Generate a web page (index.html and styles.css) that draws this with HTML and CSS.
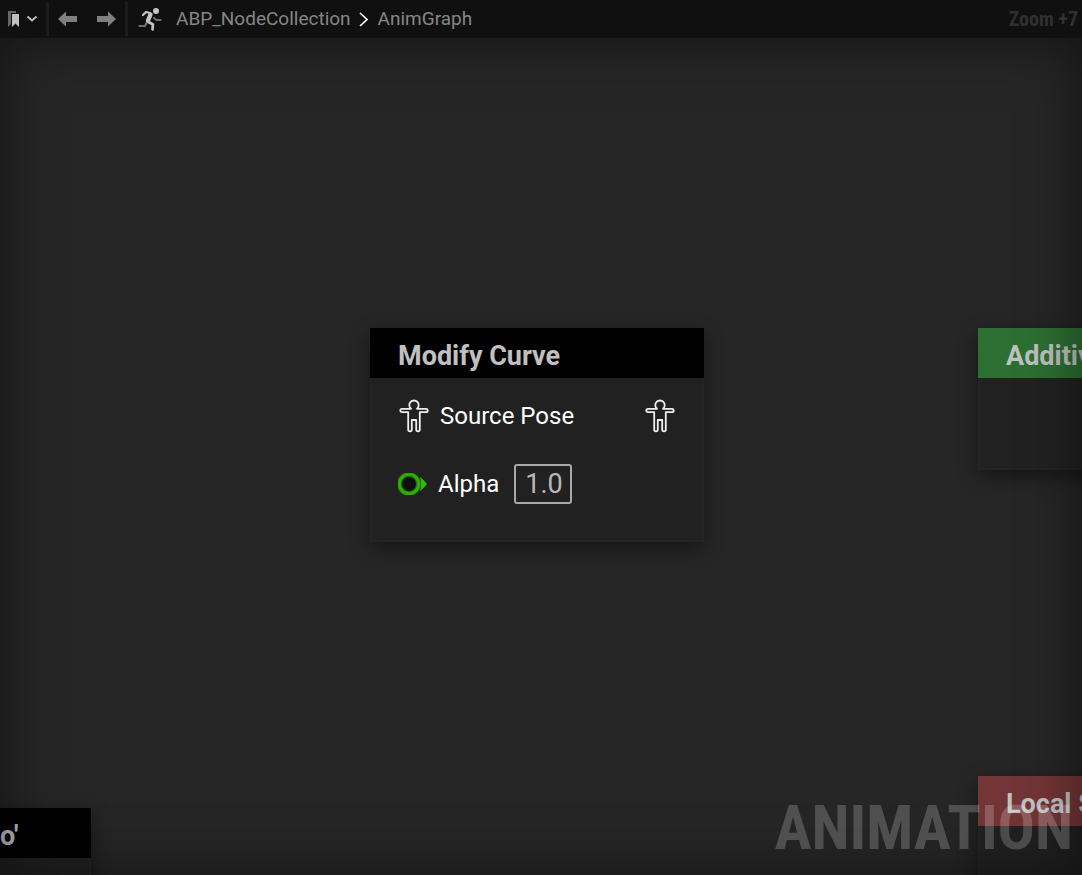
FILE: index.html
```html
<!DOCTYPE html>
<html lang="en">
<head>
<meta charset="utf-8">
<title>ABP_NodeCollection - AnimGraph</title>
<link rel="stylesheet" href="styles.css">
</head>
<body>
<svg class="defs" aria-hidden="true">
  <symbol id="pose" viewBox="0 0 30 34">
    <path d="M12 9.800 A4.700 4.700 0 1 1 18 9.800 H27 A1.600 1.600 0 0 1 27 13.200 H20.800 V30.500 A1.800 1.800 0 0 1 17.200 30.500 V21 H12.800 V30.500 A1.800 1.800 0 0 1 9.200 30.500 V13.200 H3 A1.600 1.600 0 0 1 3 9.800 Z" fill="none" stroke="#eee" stroke-width="1.800" stroke-linejoin="round"/>
  </symbol>
</svg>
<div class="editor">
  <header class="toolbar">
    <button class="tool bookmarks" aria-label="Bookmarks">
      <svg width="32" height="20" viewBox="0 0 32 20"><path d="M1 2H9V4H4V15L1 18Z" fill="#666"/><path d="M5 5H12V18L8.500 14.500 5 18Z" fill="#c0c0c0"/><path d="M20.500 7.500L25 11.500 29.500 7.500" fill="none" stroke="#c0c0c0" stroke-width="1.800"/></svg>
    </button>
    <button class="tool" aria-label="Back">
      <svg width="20" height="16" viewBox="0 0 20 16"><path d="M0 8L8 .5V5H19V11H8V15.500Z" fill="#808080"/></svg>
    </button>
    <button class="tool" aria-label="Forward">
      <svg width="20" height="16" viewBox="0 0 20 16"><path d="M20 8L12 .5V5H1V11H12V15.500Z" fill="#808080"/></svg>
    </button>
    <nav class="crumbs" aria-label="Breadcrumb">
      <svg width="24" height="24" viewBox="0 0 24 24"><g fill="none" stroke-linecap="round" stroke-linejoin="round"><path d="M16 11L18.500 13H22.500M9 15L7 19H1.500" stroke="#707070" stroke-width="2.200"/><path d="M5 8L8 5 12 6" stroke="#c4c4c4" stroke-width="2.200"/><path d="M12.500 7.500L10 13.500" stroke="#c4c4c4" stroke-width="4.400"/><path d="M10.500 15L15 17.500 14.500 22.500" stroke="#c4c4c4" stroke-width="2.600"/></g><circle cx="18" cy="4" r="3" fill="#c4c4c4"/></svg>
      <a class="crumb" href="#asset">ABP_NodeCollection</a>
      <svg class="chevron" width="10" height="16" viewBox="0 0 10 16"><path d="M1 2L8 8.500 1 15" fill="none" stroke="#fff" stroke-width="1.700"/></svg>
      <a class="crumb current" href="#graph">AnimGraph</a>
    </nav>
    <span class="zoom">Zoom +7</span>
  </header>
  <main class="canvas">
    <section class="node modify">
      <h2 class="title">Modify Curve</h2>
      <div class="body">
        <div class="row"><svg class="pose"><use href="#pose"/></svg><span class="pin">Source Pose</span><svg class="pose out"><use href="#pose"/></svg></div>
        <div class="row alpha">
          <svg class="port" width="29" height="22" viewBox="0 0 29 22"><circle cx="11" cy="11" r="9.500" fill="#101010" stroke="#1d6a04" stroke-width="5"/><circle cx="11" cy="11" r="9.700" fill="none" stroke="#32ac04" stroke-width="3"/><path d="M22 4Q26 7 29 11 26 15 22 18Q24 11 22 4Z" fill="#32bc02"/></svg>
          <label class="pin" for="alpha">Alpha</label>
          <input class="value" id="alpha" type="text" value="1.0">
        </div>
      </div>
    </section>
    <section class="node additive"><h2 class="title">Additive</h2><div class="body"></div></section>
    <section class="node local"><h2 class="title">Local Space</h2><div class="body"></div></section>
    <section class="node partial"><h2 class="title">o'</h2><div class="body"></div></section>
    <div class="vignette"></div>
    <div class="watermark">ANIMATION</div>
  </main>
</div>
</body>
</html>
```
FILE: styles.css
```css
* { box-sizing: border-box; }
body {
  margin: 0;
  background: #262626;
  color: #fff;
  font-family: Roboto, "Liberation Sans", sans-serif;
}
.defs { position: absolute; width: 0; height: 0; }
.editor { display: flex; flex-direction: column; height: 100vh; overflow: hidden; }
.toolbar {
  display: flex;
  align-items: center;
  flex: none;
  height: 38px;
  padding-right: 4px;
  background: #101010;
}
.tool {
  display: flex;
  align-items: center;
  justify-content: center;
  width: 38px;
  height: 34px;
  padding: 0;
  border: 0;
  background: none;
}
.bookmarks { width: 49px; border-right: 3px solid #1c1c1c; }
.crumbs {
  display: flex;
  align-items: center;
  height: 34px;
  padding-left: 10px;
  border-left: 3px solid #1c1c1c;
}
.crumb { margin-left: 14px; color: #868686; font-size: 19px; line-height: 24px; text-decoration: none; }
.chevron { margin-left: 8px; }
.crumb.current { margin-left: 9px; }
.zoom {
  margin-left: auto;
  color: #303030;
  font-family: "Roboto Condensed", Roboto, sans-serif;
  font-size: 20px;
  font-weight: 700;
}
.canvas { position: relative; flex: 1; overflow: hidden; }
.node {
  position: absolute;
  display: flex;
  flex-direction: column;
  width: 334px;
  box-shadow: 0 6px 18px rgba(0, 0, 0, .45);
}
.title {
  margin: 0;
  padding: 3px 28px 0;
  height: 50px;
  overflow: hidden;
  background: #000;
  color: #c0c0c0;
  font-size: 27px;
  line-height: 50px;
  white-space: nowrap;
}
.body { flex: 1; border: 2px solid #242424; border-top: 0; background: #212121; }
.modify { left: 370px; top: 290px; }
.modify .body { padding: 20px 27px 36px 26px; }
.additive { left: 978px; top: 290px; height: 142px; }
.additive .title { background: #2d6f32; }
.local { left: 978px; top: 738px; height: 214px; }
.local .title { background: #733535; }
.partial { left: -243px; top: 770px; height: 214px; }
.partial .title { padding-left: 243px; }
.row { display: flex; align-items: center; height: 36px; }
.alpha { height: 40px; margin-top: 30px; }
.pose { width: 30px; height: 34px; margin-left: 1px; }
.out { margin-left: auto; }
.pin { margin-left: 11px; font-size: 24px; line-height: 32px; }
.value {
  width: 58px;
  height: 40px;
  margin-left: 15px;
  padding: 0 6px 0 9px;
  border: 2px solid #a8a8a8;
  border-radius: 3px;
  background: #212121;
  color: #b8b8b8;
  font: 27px Roboto, sans-serif;
}
.vignette {
  position: absolute;
  inset: 0;
  pointer-events: none;
  box-shadow: inset 0 0 60px rgba(0, 0, 0, .5);
}
.watermark {
  position: absolute;
  right: 9px;
  bottom: 9px;
  color: rgba(255, 255, 255, .2);
  font-family: "Roboto Condensed", Roboto, sans-serif;
  font-size: 62px;
  font-weight: 700;
  line-height: 76px;
}
```
